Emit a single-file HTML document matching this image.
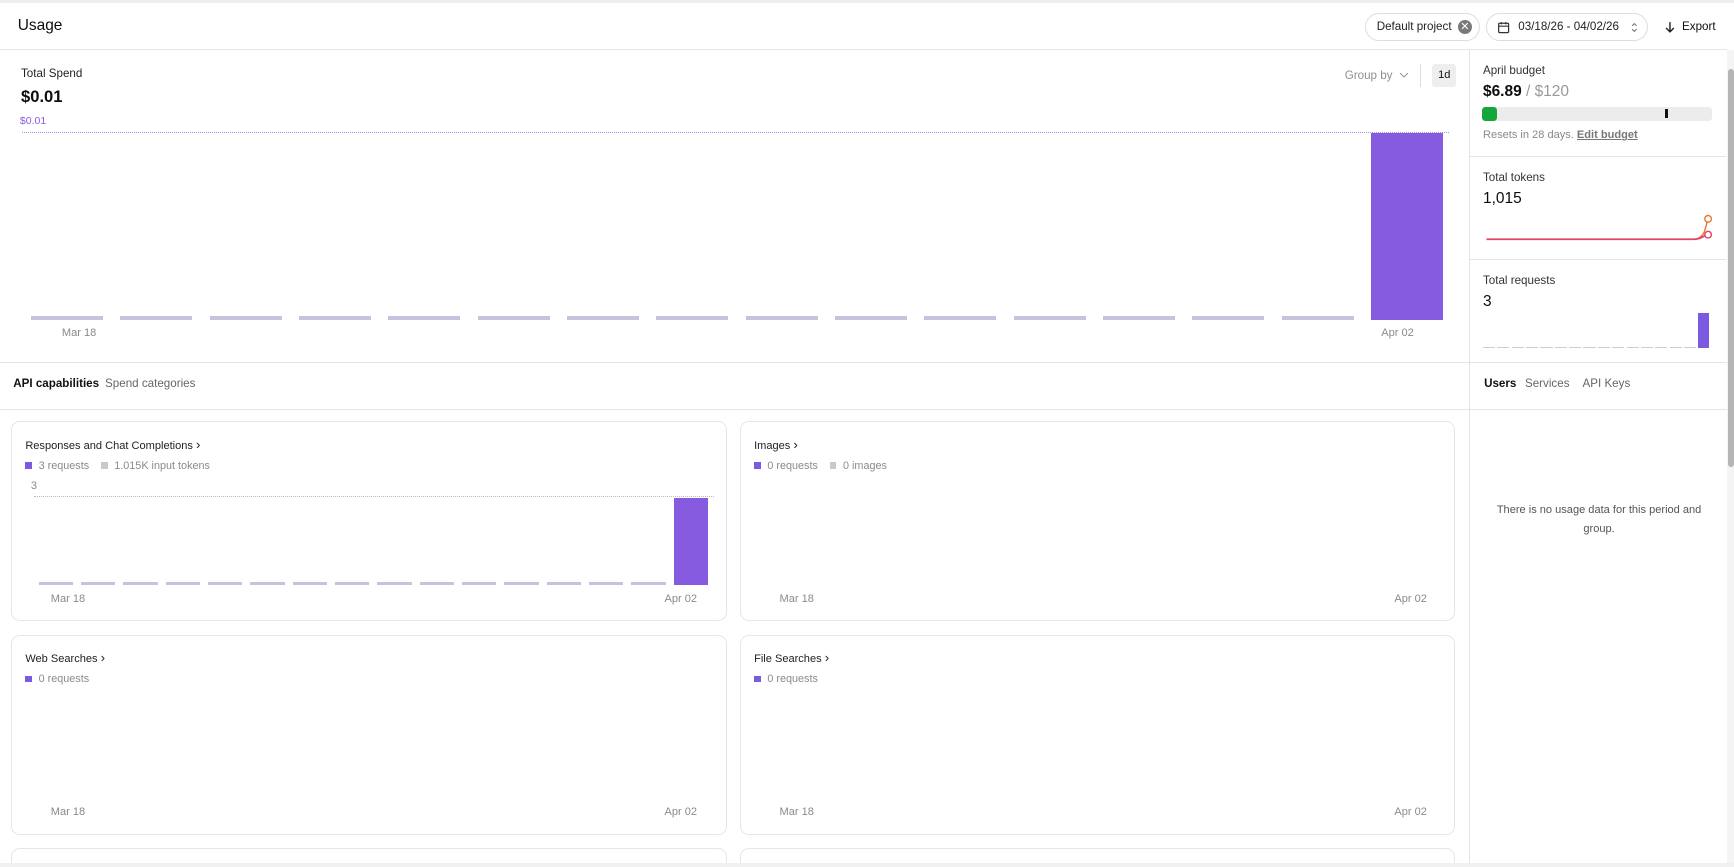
<!DOCTYPE html>
<html><head><meta charset="utf-8"><style>
html{zoom:1.10587}
*{box-sizing:border-box;margin:0;padding:0}
body{background:#fff;font-family:"Liberation Sans",sans-serif;color:#0d0d0d;overflow:hidden}
#w{width:1568px;height:784px;overflow:hidden;position:relative}
.a{position:absolute}
.t{font-size:11px;color:#333}
.g{color:#8f8f8f}
.hl{position:absolute;height:1px;background:#e5e5e5}
.vl{position:absolute;width:1px;background:#e5e5e5}
.bars{position:absolute;display:flex;align-items:flex-end}
.bars i{display:block;height:3px;background:#c7c2dd;flex:none}
.card{position:absolute;border:1px solid #e6e6e6;border-radius:8px;background:#fff}
.card .ti{position:absolute;left:12px;top:13px;font-size:10px;color:#222}
.lg{position:absolute;left:12px;top:34px;font-size:9.8px;color:#8a8a8a}
.sq{display:inline-block;width:6px;height:6px;margin-right:6px;vertical-align:0px}
.xl{position:absolute;font-size:10px;color:#8a8a8a}
.pill{position:absolute;border:1px solid #ddd;border-radius:13px;height:25px;font-size:10.5px;color:#222;line-height:23px}
</style></head><body><div id="w">
<div class="hl" style="top:0;left:0;width:1568px;height:3px;background:#eeeeee"></div>
<div class="a" style="left:16px;top:15px;font-size:14px;font-weight:500">Usage</div>
<div class="pill" style="left:1234px;top:12px;width:104px;padding-left:10px">Default project<span class="a" style="right:6px;top:5px;width:13px;height:13px;border-radius:50%;background:#7a7a7a;color:#fff;font-size:10px;line-height:13px;text-align:center">✕</span></div>
<div class="pill" style="left:1344px;top:12px;width:146px;padding-left:28px">03/18/26 - 04/02/26
<svg class="a" style="left:9px;top:6px" width="12" height="12" viewBox="0 0 12 12" fill="none" stroke="#333" stroke-width="1.1"><rect x="1.5" y="2" width="9" height="8.5" rx="1"/><path d="M1.5 4.7h9M4 1v2M8 1v2"/></svg>
<svg class="a" style="right:8px;top:7px" width="6" height="10" viewBox="0 0 6 10" fill="none" stroke="#777" stroke-width="1"><path d="M1 3.5L3 1.5L5 3.5M1 6.5L3 8.5L5 6.5"/></svg></div>
<svg class="a" style="left:1506px;top:19px" width="9" height="11" viewBox="0 0 9 11" fill="none" stroke="#222" stroke-width="1.3"><path d="M4.5 1v8.5M1 6.3l3.5 3.5L8 6.3"/></svg>
<div class="a" style="left:1521px;top:18px;font-size:10.5px">Export</div>
<div class="hl" style="top:44px;left:0;width:1562px"></div>
<div class="vl" style="left:1328px;top:45px;height:739px"></div>

<div class="a t" style="left:19px;top:61px;color:#222;font-size:10.5px">Total Spend</div>
<div class="a" style="left:19px;top:79px;font-size:15px;font-weight:600">$0.01</div>
<div class="a" style="left:18px;top:104px;font-size:9.5px;color:#8a5ce0">$0.01</div>
<div class="a" style="left:20px;top:119px;width:1290px;border-top:1px dotted #a88ce6"></div>
<div class="a g" style="left:1216px;top:62px;font-size:10.5px">Group by
<svg style="margin-left:3px" width="9" height="6" viewBox="0 0 9 6" fill="none" stroke="#999" stroke-width="1"><path d="M1 1l3.5 3.5L8 1"/></svg></div>
<div class="vl" style="left:1284px;top:58px;height:21px;background:#ddd"></div>
<div class="a" style="left:1295px;top:58px;width:22px;height:21px;background:#eee;border-radius:3px;font-size:10px;text-align:center;line-height:21px">1d</div>
<div class="bars" style="left:28px;top:119px;height:170px;gap:15.8px">
<i style="width:65px"></i><i style="width:65px"></i><i style="width:65px"></i><i style="width:65px"></i><i style="width:65px"></i><i style="width:65px"></i><i style="width:65px"></i><i style="width:65px"></i><i style="width:65px"></i><i style="width:65px"></i><i style="width:65px"></i><i style="width:65px"></i><i style="width:65px"></i><i style="width:65px"></i><i style="width:65px"></i><i style="width:65px;height:169px;background:#875bdf"></i></div>
<div class="xl" style="left:56px;top:296px">Mar 18</div>
<div class="xl" style="left:1249px;top:296px">Apr 02</div>
<div class="hl" style="top:327px;left:0;width:1562px"></div>

<div class="a" style="left:12px;top:341px;font-size:10.5px;font-weight:600;color:#111">API capabilities</div>
<div class="a" style="left:95px;top:341px;font-size:10.5px;color:#666">Spend categories</div>
<div class="hl" style="top:370px;left:0;width:1562px"></div>

<div class="card" style="left:10px;top:381px;width:647px;height:181px">
<div class="ti">Responses and Chat Completions <span style="font-size:12px">›</span></div>
<div class="lg"><span class="sq" style="background:#7a5ae0"></span>3 requests <span class="sq" style="background:#c9c9c9;margin-left:8px"></span>1.015K input tokens</div>
<div class="xl" style="left:17px;top:52px">3</div>
<div class="a" style="left:20px;top:67px;width:615px;border-top:1px dotted #bbb"></div>
<div class="bars" style="left:24px;top:67px;height:80px;gap:7.3px">
<i style="width:31px"></i><i style="width:31px"></i><i style="width:31px"></i><i style="width:31px"></i><i style="width:31px"></i><i style="width:31px"></i><i style="width:31px"></i><i style="width:31px"></i><i style="width:31px"></i><i style="width:31px"></i><i style="width:31px"></i><i style="width:31px"></i><i style="width:31px"></i><i style="width:31px"></i><i style="width:31px"></i><i style="width:31px;height:79px;background:#875bdf"></i></div>
<div class="xl" style="left:35px;top:154px">Mar 18</div>
<div class="xl" style="left:590px;top:154px">Apr 02</div>
</div>
<div class="card" style="left:669px;top:381px;width:647px;height:181px">
<div class="ti">Images <span style="font-size:12px">›</span></div>
<div class="lg"><span class="sq" style="background:#7a5ae0"></span>0 requests <span class="sq" style="background:#c9c9c9;margin-left:8px"></span>0 images</div>
<div class="xl" style="left:35px;top:154px">Mar 18</div>
<div class="xl" style="left:591px;top:154px">Apr 02</div>
</div>
<div class="card" style="left:10px;top:574px;width:647px;height:181px">
<div class="ti">Web Searches <span style="font-size:12px">›</span></div>
<div class="lg"><span class="sq" style="background:#7a5ae0"></span>0 requests</div>
<div class="xl" style="left:35px;top:154px">Mar 18</div>
<div class="xl" style="left:590px;top:154px">Apr 02</div>
</div>
<div class="card" style="left:669px;top:574px;width:647px;height:181px">
<div class="ti">File Searches <span style="font-size:12px">›</span></div>
<div class="lg"><span class="sq" style="background:#7a5ae0"></span>0 requests</div>
<div class="xl" style="left:35px;top:154px">Mar 18</div>
<div class="xl" style="left:591px;top:154px">Apr 02</div>
</div>
<div class="card" style="left:10px;top:767px;width:647px;height:40px"></div>
<div class="card" style="left:669px;top:767px;width:647px;height:40px"></div>
<div class="hl" style="top:780px;left:0;width:1568px;height:4px;background:#f0f0f0"></div>

<div class="a" style="left:1341px;top:58px;font-size:10.5px;color:#333">April budget</div>
<div class="a" style="left:1341px;top:75px;font-size:14px;font-weight:600">$6.89 <span style="color:#999;font-weight:500">/ $120</span></div>
<div class="a" style="left:1340px;top:97px;width:208px;height:12px;background:#ececec;border-radius:3px"></div>
<div class="a" style="left:1340px;top:97px;width:14px;height:12px;background:#14a53c;border-radius:3px"></div>
<div class="a" style="left:1506px;top:99px;width:2px;height:8px;background:#111"></div>
<div class="a" style="left:1341px;top:117px;font-size:10px;color:#8a8a8a">Resets in 28 days. <span style="color:#777;text-decoration:underline;font-weight:600">Edit budget</span></div>
<div class="hl" style="top:141px;left:1329px;width:232px"></div>
<div class="a" style="left:1341px;top:155px;font-size:10.5px;color:#333">Total tokens</div>
<div class="a" style="left:1341px;top:172px;font-size:14px;font-weight:500">1,015</div>
<svg class="a" style="left:1340px;top:190px" width="212" height="32" viewBox="0 0 212 32" fill="none">
<path d="M4 26.5H192Q198 26 201 20Q203 14 204 9" stroke="#ea7a3a" stroke-width="1.3"/>
<path d="M4 26.5H192Q198 26 201 23.5L202 22.5" stroke="#e0456a" stroke-width="1.6"/>
<circle cx="204.5" cy="8" r="3" stroke="#ea7a3a" stroke-width="1.3" fill="#fff"/>
<circle cx="204.5" cy="22.3" r="3" stroke="#e0456a" stroke-width="1.3" fill="#fff"/>
</svg>
<div class="hl" style="top:234px;left:1329px;width:232px"></div>
<div class="a" style="left:1341px;top:248px;font-size:10.5px;color:#333">Total requests</div>
<div class="a" style="left:1341px;top:265px;font-size:14px;font-weight:500">3</div>
<div class="bars" style="left:1341px;top:283px;height:32px;gap:2px">
<i style="width:11px;height:1px;background:#ccc"></i><i style="width:11px;height:1px;background:#ccc"></i><i style="width:11px;height:1px;background:#ccc"></i><i style="width:11px;height:1px;background:#ccc"></i><i style="width:11px;height:1px;background:#ccc"></i><i style="width:11px;height:1px;background:#ccc"></i><i style="width:11px;height:1px;background:#ccc"></i><i style="width:11px;height:1px;background:#ccc"></i><i style="width:11px;height:1px;background:#ccc"></i><i style="width:11px;height:1px;background:#ccc"></i><i style="width:11px;height:1px;background:#ccc"></i><i style="width:11px;height:1px;background:#ccc"></i><i style="width:11px;height:1px;background:#ccc"></i><i style="width:11px;height:1px;background:#ccc"></i><i style="width:11px;height:1px;background:#ccc"></i><i style="width:10px;height:32px;background:#7b5ae0"></i></div>
<div class="a" style="left:1342px;top:341px;font-size:10.5px;font-weight:600;color:#111">Users</div>
<div class="a" style="left:1379px;top:341px;font-size:10.5px;color:#666">Services</div>
<div class="a" style="left:1431px;top:341px;font-size:10.5px;color:#666">API Keys</div>
<div class="a" style="left:1338px;top:453px;width:216px;text-align:center;font-size:10px;line-height:17px;color:#555">There is no usage data for this period and group.</div>

<div class="a" style="left:1562px;top:45px;width:6px;height:735px;background:#f4f4f4"></div>
<div class="a" style="left:1563px;top:62px;width:5px;height:360px;background:#b5b5b5;border-radius:3px"></div>
</div></body></html>
